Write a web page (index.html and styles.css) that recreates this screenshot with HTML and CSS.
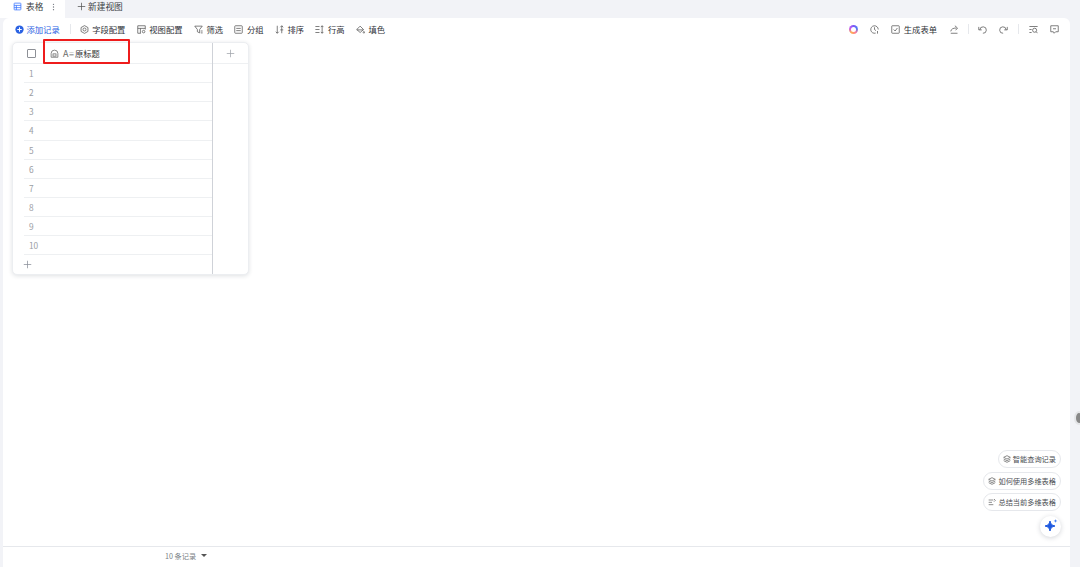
FILE: index.html
```html
<!DOCTYPE html>
<html lang="zh">
<head>
<meta charset="utf-8">
<title>表格</title>
<link rel="stylesheet" href="styles.css">
</head>
<body>
<div class="app">
  <div class="tabs">
    <div class="tab active">
      <svg class="ic" viewBox="0 0 12 12" fill="none" stroke="#3370ff"><rect x="1.500" y="1.500" width="9" height="9" rx=".8"/><path d="M1.500 4.500h9M1.500 7.500h9M4.500 4.500v6"/></svg>
      <span>表格</span>
      <svg class="dots" viewBox="0 0 4 12" fill="#6f747c"><circle cx="2" cy="2" r="1"/><circle cx="2" cy="6" r="1"/><circle cx="2" cy="10" r="1"/></svg>
    </div>
    <div class="tab new">
      <svg class="ic" viewBox="0 0 12 12" fill="none" stroke="#555"><path d="M6 1v10M1 6h10"/></svg>
      <span>新建视图</span>
    </div>
  </div>
  <main class="sheet">
    <div class="toolbar">
      <div class="tool add">
        <svg class="ic" viewBox="0 0 12 12"><circle cx="6" cy="6" r="5.500" fill="#2b62e3"/><path d="M6 3v6M3 6h6" stroke="#fff" stroke-width="1.400"/></svg>
        <span>添加记录</span>
      </div>
      <i class="sep sep-a"></i>
      <div class="tool"><svg class="ic" viewBox="0 0 12 12" fill="none" stroke="#555"><path d="M6 .8l4.600 2.600v5.200L6 11.200 1.400 8.600V3.400z"/><circle cx="6" cy="6" r="2"/></svg><span>字段配置</span></div>
      <div class="tool"><svg class="ic" viewBox="0 0 12 12" fill="none" stroke="#555"><path d="M5 11H1V1h10v5M1 4.500h10M4.500 4.500V11"/><circle cx="8.800" cy="8.800" r="1.700"/></svg><span>视图配置</span></div>
      <div class="tool"><svg class="ic" viewBox="0 0 12 12" fill="none" stroke="#555"><path d="M1 1.500h10L7.500 6v4.500L4.500 9V6z"/><path d="M9 8h2.500M9 10.500h2.500"/></svg><span>筛选</span></div>
      <div class="tool"><svg class="ic" viewBox="0 0 12 12" fill="none" stroke="#555"><rect x="1" y="1" width="10" height="10" rx="1"/><path d="M3 4.500h6M3 7.500h6"/></svg><span>分组</span></div>
      <div class="tool"><svg class="ic" viewBox="0 0 12 12" fill="none" stroke="#555"><path d="M3 1v10M1 9l2 2 2-2M9 1v10M7 3l2-2 2 2M7 6.500h4"/></svg><span>排序</span></div>
      <div class="tool"><svg class="ic" viewBox="0 0 12 12" fill="none" stroke="#555"><path d="M.5 2h5.500M.5 6h5.500M.5 10h5.500M9.500 1v10M7.800 2.800L9.500 1l1.700 1.800M7.800 9.200L9.500 11l1.700-1.800"/></svg><span>行高</span></div>
      <div class="tool"><svg class="ic" viewBox="0 0 12 12" fill="none" stroke="#555"><path d="M5.500 1.500L10 6 5.500 10 1 6zM1 6.500h9"/><circle cx="10.500" cy="9.800" r="1"/></svg><span>填色</span></div>
      <div class="spacer"></div>
      <div class="ring"></div>
      <svg class="ic rt-clock" viewBox="0 0 12 12" fill="none" stroke="#555"><path d="M7.500 10.800A5 5 0 1 1 11 6"/><path d="M6 3v3l2 1.500M10 8v3.500"/></svg>
      <div class="tool form"><svg class="ic" viewBox="0 0 12 12" fill="none" stroke="#555"><rect x="1" y="1" width="10" height="10" rx=".8"/><path d="M3.500 6l2 2 3-4"/></svg><span>生成表单</span></div>
      <svg class="ic share" viewBox="0 0 12 12" fill="none" stroke="#555"><path d="M1 11h9M1 8.500C1.500 5.500 4 4 8.500 4M6.500 1l3.500 3-2.500 3"/></svg>
      <i class="sep sep-b"></i>
      <svg class="ic undo" viewBox="0 0 12 12" fill="none" stroke="#555"><path d="M2.500 6.500A4.300 4.300 0 1 1 6.500 11M1 2.500v4h4"/></svg>
      <svg class="ic redo" viewBox="0 0 12 12" fill="none" stroke="#555"><path d="M9.500 6.500A4.300 4.300 0 1 0 5.500 11M11 2.500v4H7"/></svg>
      <i class="sep sep-c"></i>
      <svg class="ic find" viewBox="0 0 12 12" fill="none" stroke="#555"><path d="M.5 2h11M.5 6h3M.5 10h3"/><circle cx="7.500" cy="7" r="2.700"/><path d="M9.500 9l2 2"/></svg>
      <svg class="ic chat" viewBox="0 0 12 12" fill="none" stroke="#555"><path d="M1 1h10v8H7.500L5.500 11 4.500 9H1z"/><path d="M4 5h4"/></svg>
    </div>
    <div class="grid">
      <div class="left">
        <div class="head">
          <span class="check"></span>
          <svg class="ic lock" viewBox="0 0 12 12" fill="none" stroke="#666"><path d="M1.500 11V6a4.500 4.500 0 0 1 9 0v5z"/><rect x="4" y="6.500" width="4" height="3"/></svg>
          <span class="ftype">A<span class="ftype-lines">≡</span></span>
          <span class="fname">原标题</span>
        </div>
        <div class="row"><span class="num">1</span></div>
        <div class="row"><span class="num">2</span></div>
        <div class="row"><span class="num">3</span></div>
        <div class="row"><span class="num">4</span></div>
        <div class="row"><span class="num">5</span></div>
        <div class="row"><span class="num">6</span></div>
        <div class="row"><span class="num">7</span></div>
        <div class="row"><span class="num">8</span></div>
        <div class="row"><span class="num">9</span></div>
        <div class="row"><span class="num">10</span></div>
        <div class="addrow"><svg class="ic" viewBox="0 0 12 12" fill="none" stroke="#8a8f99"><path d="M6 1v10M1 6h10"/></svg></div>
      </div>
      <div class="right">
        <div class="addcol"><svg class="ic" viewBox="0 0 12 12" fill="none" stroke="#a0a4ab"><path d="M6 1v10M1 6h10"/></svg></div>
      </div>
      <div class="mark"></div>
    </div>
    <div class="assist">
      <div class="pill"><svg class="pi" viewBox="0 0 12 12" fill="none" stroke="#555"><path d="M6 1l5 2.500-5 2.500-5-2.500zM1 6l5 2.500L11 6M1 8.500L6 11l5-2.500"/></svg><span>智能查询记录</span></div>
      <div class="pill"><svg class="pi" viewBox="0 0 12 12" fill="none" stroke="#555"><path d="M6 1l5 2.500-5 2.500-5-2.500zM1 6l5 2.500L11 6M1 8.500L6 11l5-2.500"/></svg><span>如何使用多维表格</span></div>
      <div class="pill"><svg class="pi" viewBox="0 0 12 12" fill="none" stroke="#555"><path d="M1 3h7M1 6.500h5M1 10h7M9 1.500l2 2-2 2"/></svg><span>总结当前多维表格</span></div>
      <div class="spark"><svg viewBox="0 0 16 16" width="16" height="16"><path d="M7 3c.6 3 1.800 4.400 5 5-3.200.6-4.400 2-5 5-.6-3-1.800-4.400-5-5 3.200-.6 4.400-2 5-5z" fill="#1f5ae0" stroke="#1f5ae0" stroke-linejoin="round"/><path d="M12.500 1c.2 1.200.7 1.800 2 2-1.300.2-1.800.8-2 2-.2-1.200-.7-1.800-2-2 1.300-.2 1.800-.8 2-2z" fill="#4a86f5"/></svg></div>
    </div>
    <div class="footer"><span>10 条记录</span><i class="caret"></i></div>
  </main>
  <div class="edge"></div>
</div>
</body>
</html>
```
FILE: styles.css
```css
* { box-sizing: border-box; }
html, body { margin: 0; height: 100%; }
body { font-family: "Noto Sans CJK SC", "Liberation Sans", sans-serif; font-size: 8.300px; color: #2f3238; background: #f2f3f7; overflow: hidden; }
.app { height: 567px; position: relative; display: flex; flex-direction: column; padding-left: 3px; padding-right: 10px; }
.tabs { height: 18px; flex: none; display: flex; align-items: center; margin-left: -3px; background: #f2f3f7; font-size: 8.700px; color: #3c3f45; }
.tab { display: flex; align-items: center; height: 18px; }
.tab.active { width: 65px; padding: 0 0 5px 13px; background: #fff; }
.tab.active span { margin-left: 4px; }
.tab.new { padding: 0 0 5px 12px; }
.tab.new span { margin-left: 2px; }
.ic { width: 9px; height: 9px; flex: none; stroke-width: 1; display: block; }
.dots { width: 3px; height: 8px; margin-left: 9px; }
.sheet { flex: 1; position: relative; background: #fff; border-radius: 6px 6px 0 0; display: flex; flex-direction: column; min-height: 0; }
.toolbar { height: 22px; margin-bottom: 2px; flex: none; display: flex; align-items: center; padding-left: 12px; padding-right: 11px; }
.tool { display: flex; align-items: center; gap: 3.500px; margin-right: 11.400px; white-space: nowrap; }
.add { color: #2b62e3; margin-right: 0; gap: 2.500px; }
.sep { width: 1px; height: 10px; background: #e6e8ec; display: block; flex: none; }
.sep-a { margin: 0 9px 0 10px; }
.spacer { flex: 1; }
.ring { width: 9px; height: 9px; border-radius: 50%; background: conic-gradient(#7a5af8, #4b7bf5, #ff7a9a, #ffb14a, #c45af0, #7a5af8); flex: none; padding: 2px; margin-right: 12px; }
.ring::after { content: ""; display: block; width: 5px; height: 5px; border-radius: 50%; background: #fff; }
.rt-clock { margin-right: 12px; }
.form { margin-right: 13px; }
.share { margin-right: 9px; }
.sep-b { margin-right: 9px; }
.undo { margin-right: 12px; }
.redo { margin-right: 10px; }
.sep-c { margin-right: 10px; }
.find { margin-right: 12px; }
.grid { position: relative; width: 237px; height: 233px; margin-left: 9px; display: flex; background: #fff; border: 1px solid #eceef1; border-radius: 5px; box-shadow: 0 1px 4px rgba(30, 40, 60, .14); flex: none; }
.left { width: 200px; flex: none; border-right: 1px solid #cfd2d8; display: flex; flex-direction: column; }
.right { flex: 1; }
.head { height: 21px; display: flex; align-items: center; border-bottom: 1px solid #eef0f2; padding-left: 14px; flex: none; }
.addcol { height: 21px; border-bottom: 1px solid #eef0f2; display: flex; align-items: center; justify-content: center; }
.check { width: 9px; height: 9px; border: 1px solid #8d9096; border-radius: 1px; margin-right: 14px; flex: none; }
.lock { margin-right: 4px; }
.ftype { color: #666; font-size: 9px; width: 12px; flex: none; display: flex; align-items: center; }
.ftype-lines { font-size: 6px; }
.fname { color: #333; }
.row { height: 19.150px; flex: none; margin-left: 11px; border-bottom: 1px solid #eef0f2; display: flex; align-items: center; }
.num { color: #9a9da3; padding-left: 5px; }
.addrow { flex: 1; display: flex; align-items: center; padding-left: 10px; }
.mark { position: absolute; left: 30px; top: -4px; width: 87px; height: 25px; border: 2px solid #ee1c1c; border-radius: 1px; }
.assist { position: absolute; right: 9px; top: 432px; display: flex; flex-direction: column; align-items: flex-end; gap: 3.500px; }
.pill { height: 18px; display: flex; align-items: center; gap: 2px; padding: 0 4px; background: #fff; border: 1px solid #e6e8ec; border-radius: 9px; font-size: 7.200px; color: #4a4d52; white-space: nowrap; }
.pi { width: 8px; height: 8px; stroke-width: 1; flex: none; }
.spark { width: 21px; height: 21px; margin-top: 1px; border-radius: 50%; background: #fff; box-shadow: 0 1px 5px rgba(30, 40, 60, .2); display: flex; align-items: center; justify-content: center; }
.footer { position: absolute; left: 0; right: 0; bottom: 0; height: 21px; border-top: 1px solid #e6e8ec; padding: 0 0 3px 162px; display: flex; align-items: center; gap: 5px; font-size: 7.200px; color: #7b7f86; background: #fff; }
.caret { width: 0; height: 0; border: 3px solid transparent; border-top: 3.500px solid #555; border-bottom: 0; }
.edge { position: absolute; right: -4px; top: 411px; width: 10px; height: 14px; border-radius: 50%; background: #888; border: 2px solid #e4e5e8; }
```
